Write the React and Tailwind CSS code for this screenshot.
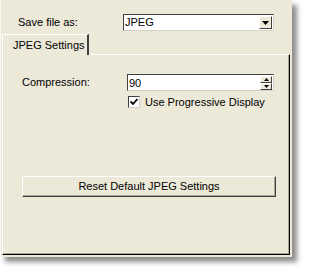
import React, { useState } from 'react'

const DownArrow = () => (
  <svg width="7" height="4" viewBox="0 0 7 4"><path d="M0 0h7L3.5 4z" fill="#000" /></svg>
)

const UpArrow = () => (
  <svg width="5" height="3" viewBox="0 0 5 3"><path d="M0 3h5L2.5 0z" fill="#000" /></svg>
)

const SmallDown = () => (
  <svg width="5" height="3" viewBox="0 0 5 3"><path d="M0 0h5L2.5 3z" fill="#000" /></svg>
)

const App = () => {
  const [progressive, setProgressive] = useState(true)
  const [quality, setQuality] = useState('90')

  return (
    <div className="w-[306px] h-[269px] bg-white font-['Liberation_Sans',Arial,sans-serif] text-[11px] text-black">
      <div className="w-[292px] h-[257px] bg-[#ECE9D8] shadow-[5px_5px_5px_rgba(0,0,0,0.45)] border-l border-[#f7f6ef] pt-[14px]">
        {/* save as row */}
        <div className="flex items-center h-[17px]">
          <span className="ml-[17px] w-[105px] leading-none">Save file as:</span>
          <div className="w-[151px] h-[17px] bg-white border-t border-l border-[#404040] border-r border-b border-r-[#d4d0c8] border-b-[#d4d0c8] flex items-center">
            <span className="pl-[1px] flex-1 leading-none">JPEG</span>
            <div className="w-[13px] h-[13px] mr-[1px] bg-[#ECE9D8] border border-t-white border-l-white border-r-[#404040] border-b-[#404040] flex items-center justify-center">
              <DownArrow />
            </div>
          </div>
        </div>

        {/* tab */}
        <div className="mt-[3px] ml-[1px] relative z-10 mb-[-1px] w-[87px] h-[21px] bg-[#ECE9D8] border-t border-l border-white border-r-2 border-r-[#404040] flex items-center pl-[10px]">
          JPEG Settings
        </div>

        {/* panel */}
        <div className="ml-[1px] w-[288px] h-[201px] border-t border-l border-white border-r border-b border-r-black border-b-black">
          <div className="h-full border-r border-b border-r-[#aca899] border-b-[#aca899] pt-[19px] pl-[19px]">
            <div className="flex items-center h-[17px]">
              <span className="w-[105px] leading-none">Compression:</span>
              <div className="w-[147px] h-[17px] bg-white border-t border-l border-[#404040] border-r border-b border-r-[#d4d0c8] border-b-[#d4d0c8] flex items-center">
                <input
                  value={quality}
                  onChange={(e) => setQuality(e.target.value)}
                  className="flex-1 min-w-0 pl-[1px] outline-none bg-transparent leading-none"
                />
                <div className="flex flex-col mr-[1px]">
                  <div className="w-[12px] h-[7px] bg-[#ECE9D8] border border-t-white border-l-white border-r-[#404040] border-b-[#404040] flex items-center justify-center"><UpArrow /></div>
                  <div className="w-[12px] h-[7px] bg-[#ECE9D8] border border-t-white border-l-white border-r-[#404040] border-b-[#404040] flex items-center justify-center"><SmallDown /></div>
                </div>
              </div>
            </div>
            <label className="flex items-center mt-[5px] ml-[106px] cursor-default">
              <span
                onClick={() => setProgressive(!progressive)}
                className="w-[12px] h-[12px] bg-white border-t border-l border-[#404040] border-r border-b border-r-[#d4d0c8] border-b-[#d4d0c8] flex items-center justify-center"
              >
                {progressive && (
                  <svg width="8" height="8" viewBox="0 0 8 8"><path d="M0.5 3.5l2.5 2.5 4.5-5" stroke="#000" strokeWidth="1.8" fill="none" /></svg>
                )}
              </span>
              <span className="ml-[5px] leading-none">Use Progressive Display</span>
            </label>

            <button className="mt-[68px] w-[254px] h-[21px] bg-[#ECE9D8] border-t border-l border-white border-r border-b border-r-[#404040] border-b-[#404040] shadow-[inset_-1px_-1px_0_#aca899] flex items-center justify-center leading-none">
              Reset Default JPEG Settings
            </button>
          </div>
        </div>
      </div>
    </div>
  )
}

export default App
